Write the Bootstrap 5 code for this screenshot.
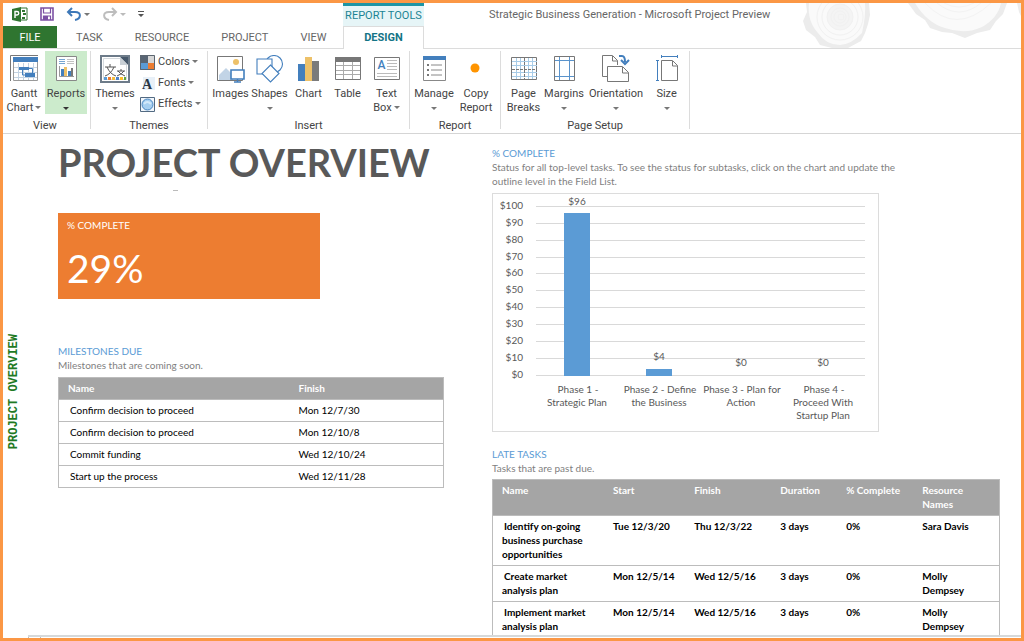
<!DOCTYPE html>
<html lang="en">
<head>
<meta charset="utf-8">
<meta name="viewport" content="width=device-width, initial-scale=1">
<title>Strategic Business Generation - Microsoft Project Preview</title>
<link href="https://cdn.jsdelivr.net/npm/bootstrap@5.3.0/dist/css/bootstrap.min.css" rel="stylesheet">
<style>
  :root { --ui: Roboto, "Open Sans", sans-serif; --report: Lato, "Open Sans", sans-serif; --frame: #fb9745; --line: #dcdcdc; --blue: #5b9bd5; }
  body { font-family: var(--ui); font-size: 11px; line-height: 14px; color: #444; }
  .window { border: 3px solid var(--frame); }
  button { color: inherit; }
  svg { display: block; flex: none; }

  /* title bar and tabs */
  .topbar { display: grid; grid-template-columns: 340px 81px 1fr; grid-template-rows: 23px 22px; grid-template-areas: "quick tools title" "tabs design ."; border-bottom: 1px solid var(--line); }
  .rings { position: absolute; top: 0; right: 0; }
  .quick { grid-area: quick; padding-left: 9px; }
  .quick button, .tab, .tool, .mini { border: 0; background: none; padding: 0; }
  .quick .caret { margin-left: 2px; }
  .tools-label { grid-area: tools; background: #e6f5f7; border-top: 3px solid #1d95a5; color: #1b8494; padding-top: 3px; }
  .doc-title { grid-area: title; padding: 5px 0 0 65px; color: #666; }
  .tabs { grid-area: tabs; }
  .tab { color: #666; padding: 2px 16px 0; height: 22px; }
  .tab-file { background: #2f7530; color: #fff; width: 54px; margin-right: 3px; }
  .tab-design { grid-area: design; border: 1px solid var(--line); border-bottom: 0; background: #fff; color: #137486; font-weight: 700; height: 23px; padding: 0; z-index: 1; }

  /* ribbon */
  .ribbon { border-bottom: 1px solid #d5d5d5; }
  .group { border-right: 1px solid var(--line); margin: 2px 0 4px; padding: 0 3px; }
  .group:first-child { padding-left: 0; }
  .group-name { height: 10px; margin-top: 5px; text-align: center; }
  .tool { display: flex; flex-direction: column; align-items: center; height: 63px; padding-top: 4px; min-width: 39px; white-space: nowrap; }
  .tool svg { margin-bottom: 4px; }
  .tool.active { background: #ccebcc; }
  .mini-list { min-width: 64px; margin-left: 4px; }
  .mini { display: flex; align-items: center; gap: 3px; height: 21px; padding-top: 1px; }
  .caret { display: inline-block; border: 3px solid transparent; border-top-color: #777; border-bottom: 0; vertical-align: 2px; margin-left: 2px; }
  .caret.below { margin: 6px 0 0; }
  .active .caret { border-top-color: #333; }
  .wide { min-width: 42px; }

  /* report */
  .rail { width: 20px; padding: 200px 0 0 3px; }
  .rail span { writing-mode: vertical-rl; transform: rotate(180deg); font: 700 12px/16px "Liberation Mono", monospace; color: #1f7a25; }
  .report { font-family: var(--report); font-size: 10px; padding: 0 21px 0 35px; display: grid; grid-template-columns: minmax(0, 386fr) minmax(0, 508fr); gap: 48px; }
  .report-title { font-size: 38px; line-height: 48px; font-weight: 700; color: #595959; margin: 4px 0 4px; white-space: nowrap; }
  .dash { width: 5px; height: 1px; background: #bbb; margin: 0 0 22px 115px; }
  .tile { background: #ed7d31; color: #fff; width: 262px; height: 86px; padding: 5px 9px; margin-bottom: 45px; }
  .tile-value { font-size: 39px; line-height: 44px; margin-top: 14px; }
  .section-name { font-size: 10px; line-height: 14px; font-weight: 400; color: var(--blue); margin: 0; }
  .note { color: #7f7f7f; margin: 0; }
  .grid-table { width: 100%; border: 1px solid #bcbcbc; color: #000; margin-top: 5px; }
  .grid-table th { background: #a5a5a5; color: #fff; }
  .grid-table th, .grid-table td { vertical-align: top; padding: 3px 9px 4px; border-bottom: 1px solid #bcbcbc; }
  .grid-table td:first-child { text-indent: 2px; }
  .late { margin-top: 4px; }
  .late td { font-weight: 700; }
  .chart { margin: 5px 0 15px; border: 1px solid #dcdcdc; max-width: 100%; }
  .chart text { font-family: var(--report); font-size: 10px; fill: #595959; text-anchor: middle; }
  .chart .scale text { text-anchor: end; }
  .sheet-edge { height: 3px; border-top: 2px solid #d6d9da; margin-left: 25px; }
  .sheet-edge i { width: 13px; border: 1px solid #bbb; border-width: 0 1px; }
</style>
</head>
<body>
<div class="window d-flex flex-column vh-100 overflow-hidden">
  <header class="topbar position-relative">
    <svg class="rings" width="221" height="45" viewBox="800 3 221 45" fill="none" aria-hidden="true">
      <path d="M806 3L807 12 803 21 806 30 815 37 820 45 832 48H848L861 41 865 33 868 24 870 15 869 3Z" fill="#ececec"/>
      <path d="M809 3Q807 21 818 33 826 45 840 45 852 44 862 33 866 15 865 3Z" fill="#fafafa"/>
      <circle cx="840" cy="17" r="13" fill="#f4f4f4"/>
      <g stroke="#f1f1f1"><circle cx="840" cy="17" r="23"/><circle cx="840" cy="17" r="18"/><circle cx="840" cy="17" r="13"/><circle cx="840" cy="17" r="9"/><circle cx="840" cy="17" r="6"/><circle cx="841" cy="17" r="3"/></g>
      <path d="M908 3L916 14 925 20 930 28 942 32 952 33 965 38 977 33 990 30 996 21 1003 14 1007 3Z" fill="#ececec"/>
      <path d="M915 3Q927 23 945 28 965 35 982 27 998 18 1001 3Z" fill="#fafafa"/>
      <g stroke="#f3f3f3"><path d="M925 3Q956 36 991 3M937 3Q959 21 981 3M944 3Q959 11 974 3"/></g>
      <path d="M1017 3L1019 12 1021 16V3Z" fill="#ececec"/>
    </svg>

    <div class="quick d-flex align-items-start">
      <svg class="mt-1" width="16" height="15" viewBox="0 0 16 15" role="img" aria-label="Project"><path d="M8 1h7v12H8z" fill="#fff" stroke="#2f7530"/><path d="M0 2l9-2v15l-9-2z" fill="#2f7530"/><path d="M3 11V4.500h2a1.700 1.700 0 010 3.500H3" fill="none" stroke="#fff" stroke-width="1.400"/><path d="M10 3h3v2h-3zM11 6h3v2h-3zM10 10h3v2h-3z" fill="#2f7530"/></svg>
      <button class="ms-2 ps-1 pt-1" aria-label="Save"><svg width="14" height="14" viewBox="0 0 14 14"><path d="M1 1h12v12H1z" fill="#fff" stroke="#7c50a4" stroke-width="1.600"/><path d="M3.500 1v5h7V1M3.500 13V9h7v4" fill="none" stroke="#7c50a4" stroke-width="1.200"/><path d="M4 9h4v4H4z" fill="#7c50a4"/></svg></button>
      <button class="d-flex align-items-center ms-2 ps-1 pt-1" aria-label="Undo"><svg width="16" height="14" viewBox="0 0 16 14" fill="none" stroke="#3d78b8" stroke-width="2"><path d="M6 1L2 5l4 4M2 5h7c7 0 6 7 0 8"/></svg><i class="caret"></i></button>
      <button class="d-flex align-items-center ms-2 ps-1 pt-1" aria-label="Redo"><svg width="16" height="14" viewBox="0 0 16 14" fill="none" stroke="#bdbdbd" stroke-width="2"><path d="M10 1l4 4-4 4M14 5H7C0 5 1 12 7 13"/></svg><i class="caret opacity-50"></i></button>
      <button class="ms-2 ps-1 pt-2" aria-label="Customize Quick Access Toolbar"><svg width="6" height="8" viewBox="0 0 6 8"><path d="M0 0h6v1H0zM0 3h6L3 6z" fill="#555"/></svg></button>
    </div>
    <div class="tools-label text-center text-nowrap">REPORT TOOLS</div>
    <div class="doc-title text-nowrap">Strategic Business Generation - Microsoft Project Preview</div>

    <nav class="tabs d-flex" aria-label="Ribbon tabs">
      <button class="tab tab-file">FILE</button>
      <button class="tab">TASK</button>
      <button class="tab">RESOURCE</button>
      <button class="tab">PROJECT</button>
      <button class="tab">VIEW</button>
    </nav>
    <button class="tab tab-design">DESIGN</button>
  </header>

  <section class="ribbon d-flex" aria-label="Design tools">
    <div class="group">
      <div class="d-flex">
        <button class="tool wide"><svg width="28" height="28" viewBox="0 0 28 28"><path d="M.5 26V.5H28" fill="none" stroke="#777"/><path d="M3.500 3.500h24v22h-24z" fill="#fff" stroke="#999"/><path d="M3 2h25v5H3z" fill="#437fbd"/><path d="M8.500 8v17M13.500 8v17M18.500 8v17M23.500 8v17M4 12.500h23M4 17.500h23M4 22.500h23" stroke="#c3d3e2"/><path d="M9 12h10v3H9zM15 18h10v4H15z" fill="#437fbd"/><path d="M12.500 15v5h3M19 13.500h3.500v5" fill="none" stroke="#437fbd"/></svg>Gantt<span>Chart<i class="caret"></i></span></button>
        <button class="tool wide active"><svg width="28" height="28" viewBox="0 0 28 28"><path d="M4.500 1.500h20v24h-20z" fill="#fff" stroke="#888"/><path d="M7 4.500h6M7 6.500h6M7 8.500h6" stroke="#77a6d2"/><path d="M15 4.500h7M15 6.500h7M15 8.500h7" stroke="#c2c2c2"/><path d="M7.500 11v10.500H22" fill="none" stroke="#999"/><path d="M9 14h3v7H9zM16 16h3v5h-3z" fill="#437fbd"/><path d="M12 12h3v9h-3z" fill="#edc169"/><path d="M19 13h2v8h-2z" fill="#777"/></svg>Reports<i class="caret below"></i></button>
      </div>
      <div class="group-name">View</div>
    </div>

    <div class="group">
      <div class="d-flex">
        <button class="tool wide"><svg width="30" height="28" viewBox="0 0 30 28"><path d="M1 1h28v26H1z" fill="#fff" stroke="#6d7b89" stroke-width="2"/><path d="M3.500 3.500h23v21h-23z" fill="none" stroke="#d5dade"/><path d="M20 2h8v8z" fill="#47596c"/><path d="M20 2v8h8z" fill="#c9d0d6"/><path d="M5 12h11M10 9v3M7 12q3 7 9 9M14 12q-3 7-9 9M17 16h8M21 14v2M18 16q2 3 7 5M24 16q-2 3-7 5" fill="none" stroke="#555"/><path d="M4 22h3v3H4z" fill="#5b9bd5"/><path d="M8 22h3v3H8z" fill="#ed7d31"/><path d="M12 22h3v3h-3z" fill="#f5bd3d"/><path d="M16 22h3v3h-3z" fill="#4d82c8"/><path d="M20 22h3v3h-3z" fill="#ffc02a"/><path d="M24 22h2v3h-2z" fill="#65a640"/></svg>Themes<i class="caret below"></i></button>
        <div class="mini-list">
          <button class="mini"><svg width="15" height="15" viewBox="0 0 15 15"><path d="M0 0h8v8H0z" fill="#586573"/><path d="M8 0h7v8H8z" fill="#d7d7d7"/><path d="M0 8h8v7H0z" fill="#5b9bd5"/><path d="M8 8h7v7H8z" fill="#ed7d31"/><path d="M.5 .5h14v14H.5z" fill="none" stroke="#5c6670"/></svg><span>Colors<i class="caret"></i></span></button>
          <button class="mini"><svg width="15" height="15" viewBox="0 0 15 15"><path d="M3 1h12v13H3z" fill="#e8f0f8"/><text x="7" y="13" text-anchor="middle" font-family="Liberation Serif, serif" font-weight="700" font-size="14" fill="#283746">A</text></svg><span>Fonts<i class="caret"></i></span></button>
          <button class="mini"><svg width="15" height="15" viewBox="0 0 15 15"><path d="M.5 .5h14v14H.5z" fill="#f2f7fc" stroke="#526a82"/><circle cx="7.500" cy="7.500" r="5.500" fill="#a6cff0" stroke="#4986c2"/><path d="M4 7q3-4 7 0" fill="none" stroke="#d3e9fa" stroke-width="2"/></svg><span>Effects<i class="caret"></i></span></button>
        </div>
      </div>
      <div class="group-name">Themes</div>
    </div>

    <div class="group">
      <div class="d-flex">
        <button class="tool"><svg width="28" height="28" viewBox="0 0 28 28"><path d="M.5 1.500h25v24H.5z" fill="#fff" stroke="#777"/><circle cx="19" cy="7" r="3" fill="#edc169"/><path d="M2 25V20l7-7 7 7v5z" fill="#c2d4e6"/><path d="M14 15h13v9H14z" fill="#fff" stroke="#437fbd" stroke-width="1.600"/><path d="M20.500 24v3M17 27h7" stroke="#437fbd" stroke-width="1.400"/></svg>Images</button>
        <button class="tool"><svg width="28" height="28" viewBox="0 0 28 28" fill="#fff" stroke="#437fbd" stroke-width="1.100"><circle cx="18" cy="9" r="8.500"/><path d="M1 4h15v15H1z"/><path d="M14.500 10l8.500 8.500-8.500 8.500L6 18.500z"/></svg>Shapes<i class="caret below"></i></button>
        <button class="tool"><svg width="28" height="28" viewBox="0 0 28 28"><path d="M3 9h7v17H3z" fill="#437fbd"/><path d="M10 2h7v24h-7z" fill="#edc169"/><path d="M17 6h7v20h-7z" fill="#7b7b7b"/></svg>Chart</button>
        <button class="tool"><svg width="28" height="28" viewBox="0 0 28 28"><path d="M1.500 2.500h25v22h-25z" fill="#fff" stroke="#777"/><path d="M1 2h26v5H1z" fill="#777"/><path d="M9.500 7v17M18.500 7v17M2 10.500h24M2 15.500h24M2 19.500h24" stroke="#aaa"/></svg>Table</button>
        <button class="tool"><svg width="28" height="28" viewBox="0 0 28 28"><path d="M1.500 2.500h25v22h-25z" fill="#fff" stroke="#777"/><text x="8.500" y="14" text-anchor="middle" font-family="Roboto, sans-serif" font-size="12" font-weight="500" fill="#437fbd">A</text><path d="M14 5.500h10M14 8.500h10M14 11.500h10M14 14.500h10M4 18.500h20M4 21.500h20" stroke="#bbb"/></svg>Text<span>Box<i class="caret"></i></span></button>
      </div>
      <div class="group-name">Insert</div>
    </div>

    <div class="group">
      <div class="d-flex">
        <button class="tool wide"><svg width="28" height="28" viewBox="0 0 28 28"><path d="M3.500 1.500h22v24h-22z" fill="#fff" stroke="#888"/><path d="M3 1h23v4H3z" fill="#437fbd"/><path d="M7 9h2v2H7zM7 14h2v2H7zM7 19h2v2H7z" fill="#777"/><path d="M11 10h11M11 15h11M11 20h11" stroke="#888"/></svg>Manage<i class="caret below"></i></button>
        <button class="tool wide"><svg width="28" height="28" viewBox="0 0 28 28"><circle cx="13" cy="13" r="4.500" fill="#ff9400"/></svg>Copy<span>Report</span></button>
      </div>
      <div class="group-name">Report</div>
    </div>

    <div class="group">
      <div class="d-flex">
        <button class="tool"><svg width="28" height="28" viewBox="0 0 28 28"><path d="M1.500 2.500h25v22h-25z" fill="#fff" stroke="#777"/><path d="M6.500 3v21M10.500 3v21M18.500 3v21M22.500 3v21M2 6.500h25M2 10.500h25M2 17.500h25M2 21.500h25" stroke="#a8cce8"/><path d="M14.500 3v21M2 14.500h25" stroke="#777" stroke-dasharray="3 1"/></svg>Page<span>Breaks</span></button>
        <button class="tool wide"><svg width="28" height="28" viewBox="0 0 28 28"><path d="M4.500 1.500h20v24h-20z" fill="#fff" stroke="#777"/><path d="M9.500 2v23M19.500 2v23M5 5.500h19M5 21.500h19" stroke="#5a93cb"/></svg>Margins<i class="caret below"></i></button>
        <button class="tool px-1"><svg width="28" height="28" viewBox="0 0 28 28" fill="#fff" stroke="#777"><path d="M5 21.500H.5V.500h10l5 5V10M10.500 1v5h5"/><path d="M5.500 11.500h15l6 6v9h-21zM20.500 12v6h6"/><path d="M17 1h3q3 0 3 6M19 5l4 4 4-4" fill="none" stroke="#437fbd" stroke-width="2"/></svg>Orientation<i class="caret below"></i></button>
        <button class="tool"><svg width="28" height="28" viewBox="0 0 28 28" fill="#fff" stroke="#777"><path d="M8.500 5.500h11l5 5v15h-16zM19.500 6v5h5"/><path d="M8 1.500h17M8.500 0v3M24.500 0v3M4.500 5v21M3 5.500h3M3 25.500h3" stroke="#437fbd"/></svg>Size<i class="caret below"></i></button>
      </div>
      <div class="group-name">Page Setup</div>
    </div>
  </section>

  <div class="d-flex flex-grow-1 overflow-hidden">
    <aside class="rail flex-shrink-0"><span>PROJECT OVERVIEW</span></aside>
    <main class="report flex-grow-1">
      <div>
        <h1 class="report-title">PROJECT OVERVIEW</h1>
        <div class="dash"></div>
        <div class="tile">
          <div>% COMPLETE</div>
          <div class="tile-value">29%</div>
        </div>
        <h2 class="section-name">MILESTONES DUE</h2>
        <p class="note">Milestones that are coming soon.</p>
        <table class="grid-table">
          <colgroup><col style="width:60%"><col></colgroup>
          <thead><tr><th>Name</th><th>Finish</th></tr></thead>
          <tbody>
            <tr><td>Confirm decision to proceed</td><td>Mon 12/7/30</td></tr>
            <tr><td>Confirm decision to proceed</td><td>Mon 12/10/8</td></tr>
            <tr><td>Commit funding</td><td>Wed 12/10/24</td></tr>
            <tr><td>Start up the process</td><td>Wed 12/11/28</td></tr>
          </tbody>
        </table>
      </div>
      <div class="pt-2 mt-1">
        <h2 class="section-name">% COMPLETE</h2>
        <p class="note">Status for all top-level tasks. To see the status for subtasks, click on the chart and update the<br>outline level in the Field List.</p>
        <svg class="chart" width="387" height="239" viewBox="0 0 385 237" role="img" aria-label="Percent complete by phase">
          <path d="M43 12.500h329M43 29.500h329M43 46.500h329M43 63.500h329M43 79.500h329M43 96.500h329M43 113.500h329M43 130.500h329M43 147.500h329M43 164.500h329M43 181.500h329" stroke="#d9d9d9"/>
          <path d="M71 19h26v163H71zM153 175h26v7h-26z" fill="#5b9bd5"/>
          <g class="scale">
            <text x="30" y="15">$100</text><text x="30" y="32">$90</text><text x="30" y="49">$80</text><text x="30" y="66">$70</text><text x="30" y="82">$60</text><text x="30" y="99">$50</text><text x="30" y="116">$40</text><text x="30" y="133">$30</text><text x="30" y="150">$20</text><text x="30" y="167">$10</text><text x="30" y="184">$0</text>
          </g>
          <text x="84" y="11">$96</text><text x="166" y="166">$4</text><text x="248" y="172">$0</text><text x="330" y="172">$0</text>
          <text x="85" y="199">Phase 1 -</text><text x="84" y="212">Strategic Plan</text>
          <text x="167" y="199">Phase 2 - Define</text><text x="166" y="212">the Business</text>
          <text x="249" y="199">Phase 3 - Plan for</text><text x="248" y="212">Action</text>
          <text x="331" y="199">Phase 4 -</text><text x="330" y="212">Proceed With</text><text x="330" y="225">Startup Plan</text>
        </svg>
        <h2 class="section-name">LATE TASKS</h2>
        <p class="note">Tasks that are past due.</p>
        <table class="grid-table late">
          <colgroup><col style="width:22%"><col style="width:16%"><col style="width:17%"><col style="width:13%"><col style="width:15%"><col></colgroup>
          <thead><tr><th>Name</th><th>Start</th><th>Finish</th><th>Duration</th><th>% Complete</th><th>Resource Names</th></tr></thead>
          <tbody>
            <tr><td>Identify on-going business purchase opportunities</td><td>Tue 12/3/20</td><td>Thu 12/3/22</td><td>3 days</td><td>0%</td><td>Sara Davis</td></tr>
            <tr><td>Create market analysis plan</td><td>Mon 12/5/14</td><td>Wed 12/5/16</td><td>3 days</td><td>0%</td><td>Molly Dempsey</td></tr>
            <tr><td>Implement market analysis plan</td><td>Mon 12/5/14</td><td>Wed 12/5/16</td><td>3 days</td><td>0%</td><td>Molly Dempsey</td></tr>
          </tbody>
        </table>
      </div>
    </main>
  </div>
  <div class="sheet-edge d-flex flex-shrink-0"><i></i></div>
</div>
<script src="https://cdn.jsdelivr.net/npm/bootstrap@5.3.0/dist/js/bootstrap.bundle.min.js"></script>
</body>
</html>
